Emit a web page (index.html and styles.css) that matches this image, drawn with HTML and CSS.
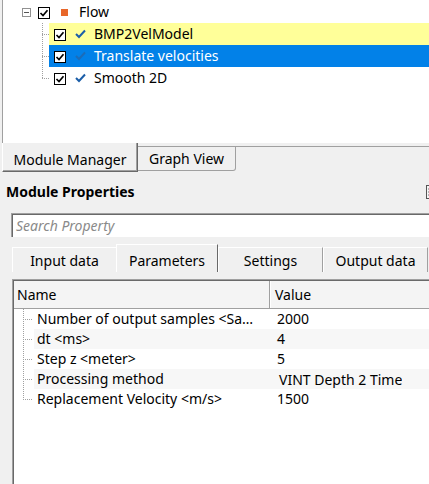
FILE: index.html
```html
<!DOCTYPE html>
<html>
<head>
<meta charset="utf-8">
<link rel="stylesheet" href="styles.css">
</head>
<body>
<div class="tree">
  <div class="trow parent">
    <span class="expander"><span class="minus"></span></span>
    <span class="cbox"><svg width="10" height="10" viewBox="0 0 10 10"><path d="M1.5 5 L4 7.5 L8.5 2.2" fill="none" stroke="#000" stroke-width="1.7"/></svg></span>
    <span class="orange"></span>
    <span class="tlabel">Flow</span>
  </div>
  <div class="trow child">
    <span class="branch"></span>
    <div class="item yellow">
      <span class="cbox"><svg width="10" height="10" viewBox="0 0 10 10"><path d="M1.5 5 L4 7.5 L8.5 2.2" fill="none" stroke="#000" stroke-width="1.7"/></svg></span>
      <svg class="tick" width="11" height="10" viewBox="0 0 11 10"><path d="M1 5 L4 8 L10 1.5" fill="none" stroke="#1b5ea8" stroke-width="2"/></svg>
      <span class="tlabel">BMP2VelModel</span>
    </div>
  </div>
  <div class="trow child">
    <span class="branch"></span>
    <div class="item blue">
      <span class="cbox"><svg width="10" height="10" viewBox="0 0 10 10"><path d="M1.5 5 L4 7.5 L8.5 2.2" fill="none" stroke="#000" stroke-width="1.7"/></svg></span>
      <svg class="tick" width="11" height="10" viewBox="0 0 11 10"><path d="M1 5 L4 8 L10 1.5" fill="none" stroke="#1c6cb8" stroke-width="2"/></svg>
      <span class="tlabel">Translate velocities</span>
    </div>
  </div>
  <div class="trow child">
    <span class="branch last"></span>
    <div class="item">
      <span class="cbox"><svg width="10" height="10" viewBox="0 0 10 10"><path d="M1.5 5 L4 7.5 L8.5 2.2" fill="none" stroke="#000" stroke-width="1.7"/></svg></span>
      <svg class="tick" width="11" height="10" viewBox="0 0 11 10"><path d="M1 5 L4 8 L10 1.5" fill="none" stroke="#1b5ea8" stroke-width="2"/></svg>
      <span class="tlabel">Smooth 2D</span>
    </div>
  </div>
</div>

<div class="btabs">
  <div class="btab active">Module Manager</div>
  <div class="btab">Graph View</div>
  <div class="bfill"></div>
</div>

<div class="props-head">
  <span class="props-title">Module Properties</span>
  <svg class="props-icon" width="10" height="14" viewBox="0 0 10 14"><rect x="0.5" y="0.5" width="9" height="13" fill="#f4f4f4" stroke="#555"/><path d="M2 4h6M2 7h6M2 10h6" stroke="#777"/></svg>
</div>

<div class="search"><span class="placeholder">Search Property</span></div>

<div class="stabs">
  <div class="stab">Input data</div>
  <div class="stab active">Parameters</div>
  <div class="stab">Settings</div>
  <div class="stab">Output data</div>
</div>

<div class="table">
  <div class="thead">
    <div class="th name">Name</div>
    <div class="th value">Value</div>
  </div>
  <div class="tr">
    <span class="branch2"></span>
    <div class="cells"><span class="cname">Number of output samples &lt;Sa…</span><span class="cval">2000</span></div>
  </div>
  <div class="tr alt">
    <span class="branch2"></span>
    <div class="cells"><span class="cname">dt &lt;ms&gt;</span><span class="cval">4</span></div>
  </div>
  <div class="tr">
    <span class="branch2"></span>
    <div class="cells"><span class="cname">Step z &lt;meter&gt;</span><span class="cval">5</span></div>
  </div>
  <div class="tr alt">
    <span class="branch2"></span>
    <div class="cells"><span class="cname">Processing method</span><span class="cval"><span class="editor">VINT Depth 2 Time</span></span></div>
  </div>
  <div class="tr">
    <span class="branch2 last"></span>
    <div class="cells"><span class="cname">Replacement Velocity &lt;m/s&gt;</span><span class="cval">1500</span></div>
  </div>
</div>
</body>
</html>
```

FILE: styles.css
```css
html, body {
  margin: 0;
  padding: 0;
}
body {
  width: 429px;
  height: 484px;
  overflow: hidden;
  background: #f0f0f0;
  font-family: "Noto Sans", "Open Sans", sans-serif;
  font-size: 14px;
  color: #000;
}

/* ---------- tree ---------- */
.tree {
  margin-left: 2px;
  height: 143px;
  box-sizing: border-box;
  border-left: 1px solid #a0a0a0;
  background: #fff;
  padding-top: 1px;
}
.trow {
  height: 22px;
  display: flex;
  align-items: center;
}
.parent { padding-left: 19px; }
.expander {
  width: 9px;
  height: 9px;
  box-sizing: border-box;
  border: 1px solid #919191;
  display: flex;
  align-items: center;
  justify-content: center;
  margin-top: 1px;
}
.minus {
  width: 5px;
  height: 1px;
  background: #555;
}
.cbox {
  width: 12px;
  height: 12px;
  box-sizing: border-box;
  border: 1px solid #000;
  background: #fff;
  display: flex;
  align-items: center;
  justify-content: center;
  flex: none;
}
.parent .cbox { margin-left: 7px; margin-top: 1px; }
.orange {
  width: 7px;
  height: 7px;
  background: #e8672a;
  margin-left: 11px;
}
.parent .tlabel { margin-left: 11px; }
.tlabel { white-space: nowrap; line-height: 22px; }

.child { padding-left: 39px; align-items: stretch; }
.branch {
  width: 7px;
  flex: none;
  background-image:
    repeating-linear-gradient(to bottom, #a0a0a0 0 1px, transparent 1px 2px),
    repeating-linear-gradient(to right, #a0a0a0 0 1px, transparent 1px 2px);
  background-size: 1px 100%, 7px 1px;
  background-position: 0 0, 0 11px;
  background-repeat: no-repeat;
}
.branch.last { background-size: 1px 12px, 7px 1px; }
.item {
  flex: 1;
  display: flex;
  align-items: center;
  padding-left: 5px;
}
.item .cbox { margin-top: 1px; }
.tick { margin-left: 9px; flex: none; }
.item .tlabel { margin-left: 8px; }
.yellow { background: #ffff99; }
.blue { background: #0281e8; color: #fff; }

/* ---------- bottom tabs ---------- */
.btabs {
  display: flex;
  align-items: flex-start;
  height: 29px;
  padding-left: 2px;
}
.btab {
  box-sizing: border-box;
  text-align: center;
  white-space: nowrap;
}
.btab.active {
  width: 136px;
  height: 29px;
  border-left: 1px solid #fff;
  border-right: 1px solid #696969;
  border-bottom: 1px solid #696969;
  line-height: 34px;
  box-shadow: inset -1px -1px 0 #a0a0a0;
}
.btab:not(.active) {
  width: 98px;
  height: 25px;
  margin-top: 3px;
  border: 1px solid #a0a0a0;
  border-left: none;
  border-radius: 0 0 3px 0;
  line-height: 24px;
}
.bfill {
  flex: 1;
  margin-top: 3px;
  border-top: 1px solid #a0a0a0;
}

/* ---------- module properties ---------- */
.props-head {
  display: flex;
  align-items: center;
  height: 38px;
  padding-left: 6px;
}
.props-title {
  font-weight: bold;
  font-size: 14px;
}
.props-icon {
  margin-left: auto;
  margin-right: -7px;
  margin-top: 1px;
}
.search {
  margin-top: 3px;
  margin-left: 11px;
  height: 24px;
  box-sizing: border-box;
  background: #fff;
  border-top: 1px solid #a0a0a0;
  border-left: 1px solid #a0a0a0;
  box-shadow: inset 1px 1px 0 #696969;
  padding-left: 4px;
  line-height: 23px;
}
.placeholder {
  font-style: italic;
  color: #8a8a8a;
}

/* ---------- sub tabs ---------- */
.stabs {
  display: flex;
  align-items: flex-end;
  height: 35px;
  margin-left: 12px;
  margin-bottom: 7px;
}
.stab {
  box-sizing: border-box;
  height: 25px;
  width: 105px;
  border-top: 1px solid #fff;
  border-left: 1px solid #fff;
  border-right: 1px solid #a0a0a0;
  text-align: center;
  line-height: 25px;
  white-space: nowrap;
}
.stab:first-child { width: 104px; border-right: none; }
.stab.active {
  width: 102px;
  height: 28px;
  line-height: 31px;
  border-right: 1px solid #696969;
}

/* ---------- table ---------- */
.table {
  margin-left: 12px;
  height: 220px;
  background: #fff;
  border-top: 1px solid #a0a0a0;
  border-left: 1px solid #a0a0a0;
  box-shadow: inset 1px 1px 0 #696969;
}
.thead {
  display: flex;
  height: 28px;
  box-sizing: border-box;
  border-bottom: 1px solid #a0a0a0;
  background: #f4f4f4;
  margin-left: 1px;
  margin-top: 1px;
}
.th {
  line-height: 27px;
  box-sizing: border-box;
}
.th.name {
  width: 256px;
  padding-left: 3px;
  border-right: 1px solid #a0a0a0;
  box-shadow: 1px 0 0 #fff;
}
.th.value { padding-left: 5px; }
.tr {
  display: flex;
  height: 20px;
  margin-left: 1px;
}
.branch2 {
  width: 20px;
  flex: none;
  background-image:
    repeating-linear-gradient(to bottom, #a0a0a0 0 1px, transparent 1px 2px),
    repeating-linear-gradient(to right, #a0a0a0 0 1px, transparent 1px 2px);
  background-size: 1px 100%, 10px 1px;
  background-position: 9px 0, 9px 10px;
  background-repeat: no-repeat;
}
.branch2.last { background-size: 1px 11px, 10px 1px; }
.cells {
  flex: 1;
  display: flex;
  line-height: 20px;
  white-space: nowrap;
}
.alt .cells { background: #f7f7f7; }
.cname {
  width: 237px;
  padding-left: 3px;
  box-sizing: border-box;
  overflow: hidden;
}
.cval { padding-left: 6px; }
.editor {
  display: block;
  height: 19px;
  overflow: hidden;
  padding-left: 2px;
  line-height: 22px;
}
```
